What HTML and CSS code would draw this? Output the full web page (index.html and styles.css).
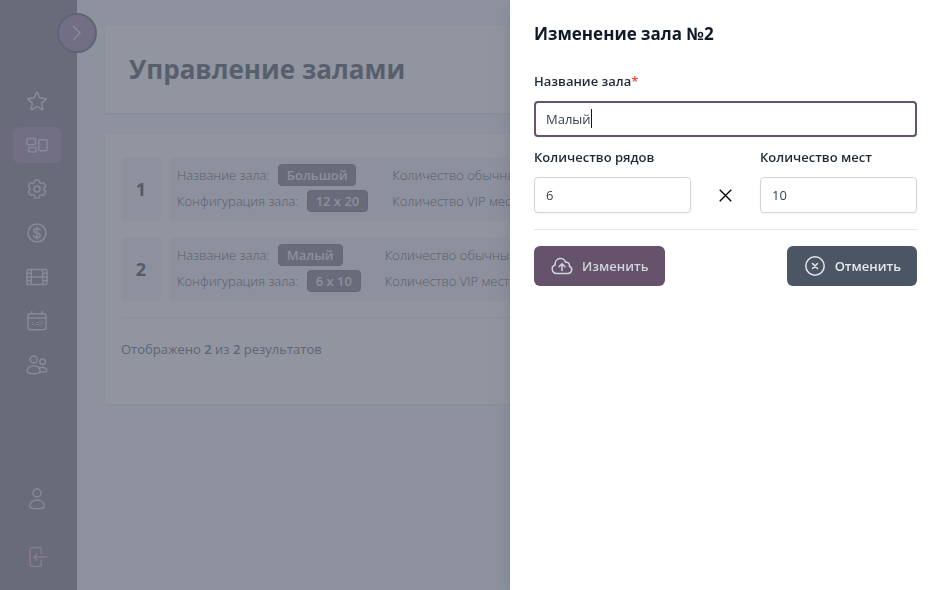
FILE: index.html
```html
<!DOCTYPE html>
<html lang="ru">
<head>
<meta charset="utf-8">
<meta name="viewport" content="width=device-width, initial-scale=1">
<title>Управление залами</title>
<link rel="stylesheet" href="styles.css">
</head>
<body>
<div class="app">
  <aside class="sidebar">
    <button class="expand" type="button" aria-label="Развернуть меню">
      <svg class="icon" viewBox="0 0 24 24"><path d="M8.500 5.500 15 12l-6.500 6.500"/></svg>
    </button>
    <nav class="menu">
      <a class="item" href="#" aria-label="Избранное"><svg class="icon" viewBox="0 0 24 24"><path d="M11.480 3.500a.562.562 0 0 1 1.040 0l2.125 5.110a.563.563 0 0 0 .475.345l5.518.442c.499.040.701.663.321.988l-4.204 3.602a.563.563 0 0 0-.182.557l1.285 5.385a.562.562 0 0 1-.840.610l-4.725-2.885a.562.562 0 0 0-.586 0L6.982 20.540a.562.562 0 0 1-.840-.610l1.285-5.386a.562.562 0 0 0-.182-.557l-4.204-3.602a.562.562 0 0 1 .321-.988l5.518-.442a.563.563 0 0 0 .475-.345z"/></svg></a>
      <a class="item active" href="#" aria-label="Залы"><svg class="icon" viewBox="0 0 24 24"><rect x="2" y="5.500" width="8.500" height="6.300" rx="1.200"/><rect x="3.700" y="14.500" width="7.600" height="4.500" rx="1.200"/><rect x="13.700" y="6.800" width="8.500" height="11" rx="1.200"/></svg></a>
      <a class="item" href="#" aria-label="Настройки"><svg class="icon" viewBox="0 0 24 24"><path d="M9.594 3.940c.090-.542.560-.940 1.110-.940h2.593c.550 0 1.020.398 1.110.940l.213 1.281c.063.374.313.686.645.870.074.040.147.083.220.127.325.196.720.257 1.075.124l1.217-.456a1.125 1.125 0 0 1 1.370.490l1.296 2.247a1.125 1.125 0 0 1-.260 1.431l-1.003.827c-.293.241-.438.613-.430.992v.255c-.008.378.137.750.430.991l1.004.827c.424.350.534.955.260 1.430l-1.298 2.247a1.125 1.125 0 0 1-1.369.491l-1.217-.456c-.355-.133-.750-.072-1.076.124a6.470 6.470 0 0 1-.220.128c-.331.183-.581.495-.644.869l-.213 1.281c-.090.543-.560.940-1.110.940h-2.594c-.550 0-1.019-.398-1.110-.940l-.213-1.281c-.062-.374-.312-.686-.644-.870a6.520 6.520 0 0 1-.220-.127c-.325-.196-.720-.257-1.076-.124l-1.217.456a1.125 1.125 0 0 1-1.369-.490l-1.297-2.247a1.125 1.125 0 0 1 .260-1.431l1.004-.827c.292-.240.437-.613.430-.991v-.255c.007-.380-.138-.751-.430-.992l-1.004-.827a1.125 1.125 0 0 1-.260-1.430l1.297-2.247a1.125 1.125 0 0 1 1.370-.491l1.216.456c.356.133.751.072 1.076-.124.072-.044.146-.086.220-.128.332-.183.582-.495.644-.869z"/><circle cx="12" cy="12" r="3"/></svg></a>
      <a class="item" href="#" aria-label="Цены"><svg class="icon" viewBox="0 0 24 24"><circle cx="12" cy="12" r="9"/><path d="M12 6v12M15 8.800c-.6-.8-1.700-1.200-3-1.200-1.700 0-3 .8-3 2.100 0 3.300 6.200 1.400 6.200 4.500 0 1.300-1.400 2.200-3.200 2.200-1.400 0-2.600-.5-3.300-1.400"/></svg></a>
      <a class="item" href="#" aria-label="Фильмы"><svg class="icon" viewBox="0 0 24 24"><rect x="2" y="4.500" width="20" height="15" rx="1.200"/><path d="M6.300 4.500v15M17.700 4.500v15M6.300 12h11.400M2 8.200h4.300M2 12h4.300M2 15.800h4.300M17.700 8.200H22M17.700 12H22M17.700 15.800H22"/></svg></a>
      <a class="item" href="#" aria-label="Сеансы"><svg class="icon" viewBox="0 0 24 24"><path d="M6.800 2.500v2.200M17.200 2.500v2.200"/><rect x="3" y="4.700" width="18" height="16" rx="2.300"/><path d="M3 9h18"/><path class="dots" d="M7.500 13v4M10 15v2M12.500 13v4M15 12v5M17.500 12v3"/></svg></a>
      <a class="item" href="#" aria-label="Пользователи"><svg class="icon" viewBox="0 0 24 24"><circle cx="8.700" cy="6.500" r="3.500"/><circle cx="17.600" cy="8.700" r="2.800"/><path d="M2.200 18.300c0-3.500 2.900-5.500 6.500-5.500s6.300 2 6.300 5.500c0 1.400-2.900 2.500-6.300 2.500s-6.500-1.100-6.500-2.500zM14.500 14.900c3.700-1.700 7.500.3 7.500 2.800 0 1.100-3.500 1.700-7 1.200"/></svg></a>
    </nav>
    <div class="account">
      <a class="item" href="#" aria-label="Профиль"><svg class="icon" viewBox="0 0 24 24"><circle cx="12" cy="6" r="4"/><path d="M4.700 19.200c0-3.700 3-6.200 7.300-6.200s7.300 2.500 7.300 6.200c0 1.500-3.300 2.500-7.300 2.500s-7.300-1-7.300-2.500z"/></svg></a>
      <a class="item exit" href="#" aria-label="Выход"><svg class="icon" viewBox="0 0 24 24"><path d="M16.300 8.500V5a2.500 2.500 0 0 0-2.500-2.500H7.500A2.500 2.500 0 0 0 5 5v14a2.500 2.500 0 0 0 2.500 2.500h6.300a2.500 2.500 0 0 0 2.500-2.500v-3.500M22 12H9.200M12 8.700 9 12l3 3.300"/></svg></a>
    </div>
  </aside>
  <main class="content">
    <header class="card heading"><h1>Управление залами</h1></header>
    <section class="card halls">
      <article class="hall">
        <div class="number">1</div>
        <div class="info">
          <div class="col">
            <p>Название зала: <span class="tag">Большой</span></p>
            <p>Конфигурация зала: <span class="tag">12 x 20</span></p>
          </div>
          <div class="col"><p>Количество обычных мест:</p><p>Количество VIP мест:</p></div>
        </div>
      </article>
      <article class="hall">
        <div class="number">2</div>
        <div class="info">
          <div class="col">
            <p>Название зала: <span class="tag">Малый</span></p>
            <p>Конфигурация зала: <span class="tag">6 x 10</span></p>
          </div>
          <div class="col"><p>Количество обычных мест:</p><p>Количество VIP мест:</p></div>
        </div>
      </article>
      <p class="total">Отображено <b>2</b> из <b>2</b> результатов</p>
    </section>
  </main>
</div>
<div class="backdrop"></div>
<section class="drawer" role="dialog" aria-labelledby="drawer-title">
  <h2 id="drawer-title">Изменение зала №2</h2>
  <form>
    <div class="field">
      <label for="name">Название зала<span class="required">*</span></label>
      <div class="current">
        <input id="name" type="text" value="Малый">
        <span class="caret"></span>
      </div>
    </div>
    <div class="size">
      <div class="field"><label for="rows">Количество рядов</label><input id="rows" type="text" inputmode="numeric" value="6"></div>
      <svg class="times" viewBox="0 0 24 24"><path d="M6 6l12 12M18 6 6 18"/></svg>
      <div class="field"><label for="seats">Количество мест</label><input id="seats" type="text" inputmode="numeric" value="10"></div>
    </div>
    <div class="actions">
      <button class="btn save" type="submit"><svg class="icon" viewBox="0 0 24 24"><path d="M12 16.500V9.750m0 0 3 3m-3-3-3 3M6.750 19.500a4.500 4.500 0 0 1-1.410-8.775 5.250 5.250 0 0 1 10.233-2.330 3 3 0 0 1 3.758 3.848A3.752 3.752 0 0 1 18 19.500z"/></svg>Изменить</button>
      <button class="btn cancel" type="button"><svg class="icon" viewBox="0 0 24 24"><circle cx="12" cy="12" r="9.200"/><path d="m9.500 9.500 5 5M14.500 9.500l-5 5"/></svg>Отменить</button>
    </div>
  </form>
</section>
</body>
</html>
```
FILE: styles.css
```css
* { box-sizing: border-box; }
body {
  margin: 0;
  background: #f3f4f6;
  color: #111827;
  font: 13px/20px "Open Sans", "Noto Sans", sans-serif;
  overflow: hidden;
}
h1, h2, p { margin: 0; }
button, input { font: inherit; }
.app { display: flex; min-height: 100vh; }
.icon {
  width: 24px;
  height: 24px;
  flex: none;
  fill: none;
  stroke: currentColor;
  stroke-width: 1.5;
  stroke-linecap: round;
  stroke-linejoin: round;
}
.sidebar {
  position: relative;
  display: flex;
  flex: none;
  flex-direction: column;
  justify-content: space-between;
  width: 77px;
  padding: 83px 16px 15px 13px;
  background: #665368;
  color: #d1d5db;
}
.menu { display: flex; flex-direction: column; gap: 8px; }
.account { display: flex; flex-direction: column; gap: 22px; }
.item {
  display: flex;
  align-items: center;
  justify-content: center;
  height: 36px;
  border-radius: 6px;
  color: inherit;
}
.active { background: #896690; }
.exit { color: #e09a9a; }
.dots { stroke-dasharray: 1 1; stroke-linecap: butt; }
.expand {
  position: absolute;
  top: 13px;
  right: -20px;
  display: flex;
  align-items: center;
  justify-content: center;
  width: 40px;
  height: 40px;
  padding: 0;
  border: 2px solid #334155;
  border-radius: 50%;
  background: #896690;
  color: #d1d5db;
}
.content { flex: 1; min-width: 0; padding: 25px 28px; }
.card {
  background: #fff;
  border-radius: 2px;
  box-shadow: 0 1px 3px rgba(0, 0, 0, .12);
}
.heading { padding: 24px; margin-bottom: 21px; }
h1 { font-size: 26px; line-height: 40px; font-weight: 700; color: #1f2937; }
.halls { padding: 23px 16px 24px; }
.hall { display: flex; gap: 8px; margin-bottom: 16px; }
.number {
  display: flex;
  align-items: center;
  justify-content: center;
  width: 40px;
  border-radius: 4px;
  background: #f1eef2;
  font-size: 18px;
  font-weight: 700;
}
.info {
  display: flex;
  flex: 1;
  gap: 24px;
  min-width: 0;
  padding: 5px 8px 7px;
  overflow: hidden;
  border-radius: 4px;
  background: #f1eef2;
  font-weight: 300;
  white-space: nowrap;
}
.col p { height: 26px; line-height: 26px; }
.tag {
  display: inline-block;
  margin-left: 5px;
  padding: 0 8px;
  border: 1px solid #4b4560;
  border-radius: 4px;
  background: #665368;
  color: #e5e7eb;
  font-weight: 600;
  line-height: 20px;
}
.total { padding: 21px 0; border-top: 1px solid #e5e7eb; color: #374151; }
.total b { font-weight: 600; }
.backdrop { position: fixed; inset: 0; background: rgba(107, 114, 128, .75); }
.drawer {
  position: fixed;
  top: 0;
  right: 0;
  bottom: 0;
  width: 427px;
  max-width: 100%;
  padding: 20px 20px 20px 24px;
  background: #fff;
  box-shadow: 0 8px 20px rgba(0, 0, 0, .12);
}
h2 { margin-bottom: 23px; font-size: 17px; line-height: 28px; font-weight: 700; }
.field { display: flex; flex-direction: column; gap: 10px; min-width: 0; }
label { font-weight: 600; color: #1f2937; }
.required { color: #ef4444; }
.field input {
  width: 100%;
  height: 36px;
  padding: 0 11px;
  border: 1px solid #d1d5db;
  border-radius: 4px;
  background: #fff;
  color: #374151;
  box-shadow: 0 1px 2px rgba(0, 0, 0, .05);
}
.current { position: relative; }
.field .current input { display: block; padding: 0 10px; border: 2px solid #64536b; outline: 0; }
.caret { position: absolute; top: 8px; left: 57px; width: 1px; height: 19px; background: #111827; }
.size {
  display: grid;
  grid-template-columns: 1fr 69px 1fr;
  align-items: end;
  margin-top: 10px;
  padding-bottom: 16px;
  border-bottom: 1px solid #e5e7eb;
}
.times { width: 23px; height: 23px; margin: 0 auto 6px; fill: none; stroke: #000; stroke-width: 1.4; }
.actions { display: flex; justify-content: space-between; margin-top: 16px; }
.btn {
  display: flex;
  align-items: center;
  gap: 8px;
  height: 40px;
  padding: 0 16px;
  border: 0;
  border-radius: 6px;
  color: #e5e7eb;
  font-weight: 600;
}
.save { background: #64536b; color: #d1d5db; }
.cancel { background: #4b5563; }
```
